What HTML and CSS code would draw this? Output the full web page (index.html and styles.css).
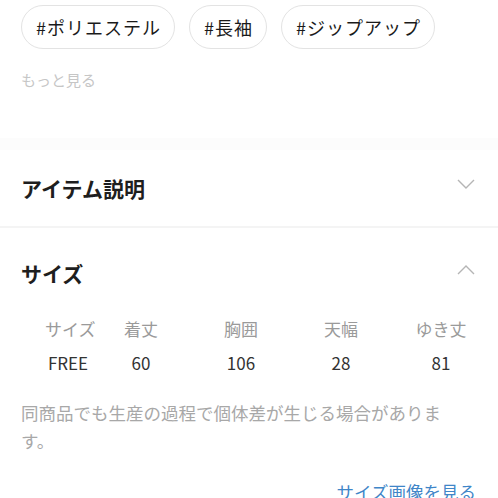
FILE: index.html
```html
<!DOCTYPE html>
<html lang="ja">
<head>
    <meta charset="UTF-8">
    <meta name="viewport" content="width=device-width, initial-scale=1.0">
    <title>アイテム詳細</title>
    <link rel="stylesheet" href="styles.css">
</head>
<body>
    <!-- タグ -->
    <div class="tags">
        <span class="tag">#ポリエステル</span>
        <span class="tag">#長袖</span>
        <span class="tag">#ジップアップ</span>
    </div>
    <div class="more">もっと見る</div>

    <div class="band"></div>

    <!-- アイテム説明 -->
    <div class="section-head closed">
        <h2>アイテム説明</h2>
        <svg class="chevron" width="18" height="10" viewBox="0 0 18 10">
            <polyline points="1,1 9,9 17,1" fill="none" stroke="#b5b5b5" stroke-width="1.4"/>
        </svg>
    </div>
    <div class="divider"></div>

    <!-- サイズ -->
    <div class="section-head open">
        <h2>サイズ</h2>
        <svg class="chevron" width="18" height="10" viewBox="0 0 18 10">
            <polyline points="1,9 9,1 17,9" fill="none" stroke="#b5b5b5" stroke-width="1.4"/>
        </svg>
    </div>

    <div class="size-table">
        <div class="size-row head">
            <span>サイズ</span>
            <span>着丈</span>
            <span>胸囲</span>
            <span>天幅</span>
            <span>ゆき丈</span>
        </div>
        <div class="size-row">
            <span>FREE</span>
            <span>60</span>
            <span>106</span>
            <span>28</span>
            <span>81</span>
        </div>
    </div>

    <p class="note">同商品でも生産の過程で個体差が生じる場合があります。</p>

    <div class="link-row">
        <a href="#" class="size-link">サイズ画像を見る</a>
    </div>
</body>
</html>
```

FILE: styles.css
```css
body {
    margin: 0;
    background-color: #fff;
    font-family: "Noto Sans CJK JP", "Noto Sans", sans-serif;
    color: #222;
}
.tags {
    display: flex;
    gap: 14px;
    padding: 5px 21px 0;
}
.tag {
    height: 42px;
    line-height: 42px;
    padding: 0 13px 0 14px;
    border: 1px solid #e3e3e3;
    border-radius: 22px;
    font-size: 18px;
    letter-spacing: 1px;
    color: #1a1a1a;
}
.more {
    margin-top: 21px;
    padding-left: 21px;
    font-size: 15px;
    line-height: 20px;
    color: #c6c6c6;
}
.band {
    margin-top: 48px;
    height: 12px;
    background-color: #fcfcfc;
}
.section-head {
    display: flex;
    align-items: center;
    justify-content: space-between;
    padding: 0 23px 0 21px;
}
.section-head h2 {
    margin: 0;
    font-size: 21px;
    font-weight: bold;
    line-height: 26px;
    color: #1e1e1e;
}
.section-head.closed {
    height: 76px;
}
.section-head.closed .chevron {
    margin-top: -8px;
}
.section-head.open {
    padding-top: 32px;
}
.section-head.open .chevron {
    margin-top: -6px;
}
.divider {
    height: 2px;
    background-color: #f4f4f4;
}
.size-table {
    margin-top: 31px;
    padding-left: 45px;
}
.size-row {
    display: grid;
    grid-template-columns: 46px repeat(4, 100px);
    font-size: 17px;
    line-height: 24px;
    color: #333;
}
.size-row span {
    text-align: center;
    white-space: nowrap;
}
.size-row.head {
    color: #9a9a9a;
    margin-bottom: 10px;
}
.note {
    margin: 24px 0 0;
    padding-left: 21px;
    max-width: 440px;
    font-size: 17.5px;
    line-height: 28px;
    color: #a8a8a8;
}
.link-row {
    margin-top: 25px;
    padding-right: 22px;
    text-align: right;
    line-height: 24px;
}
.size-link {
    font-size: 17.5px;
    color: #3f86c8;
    text-decoration: none;
}
```
